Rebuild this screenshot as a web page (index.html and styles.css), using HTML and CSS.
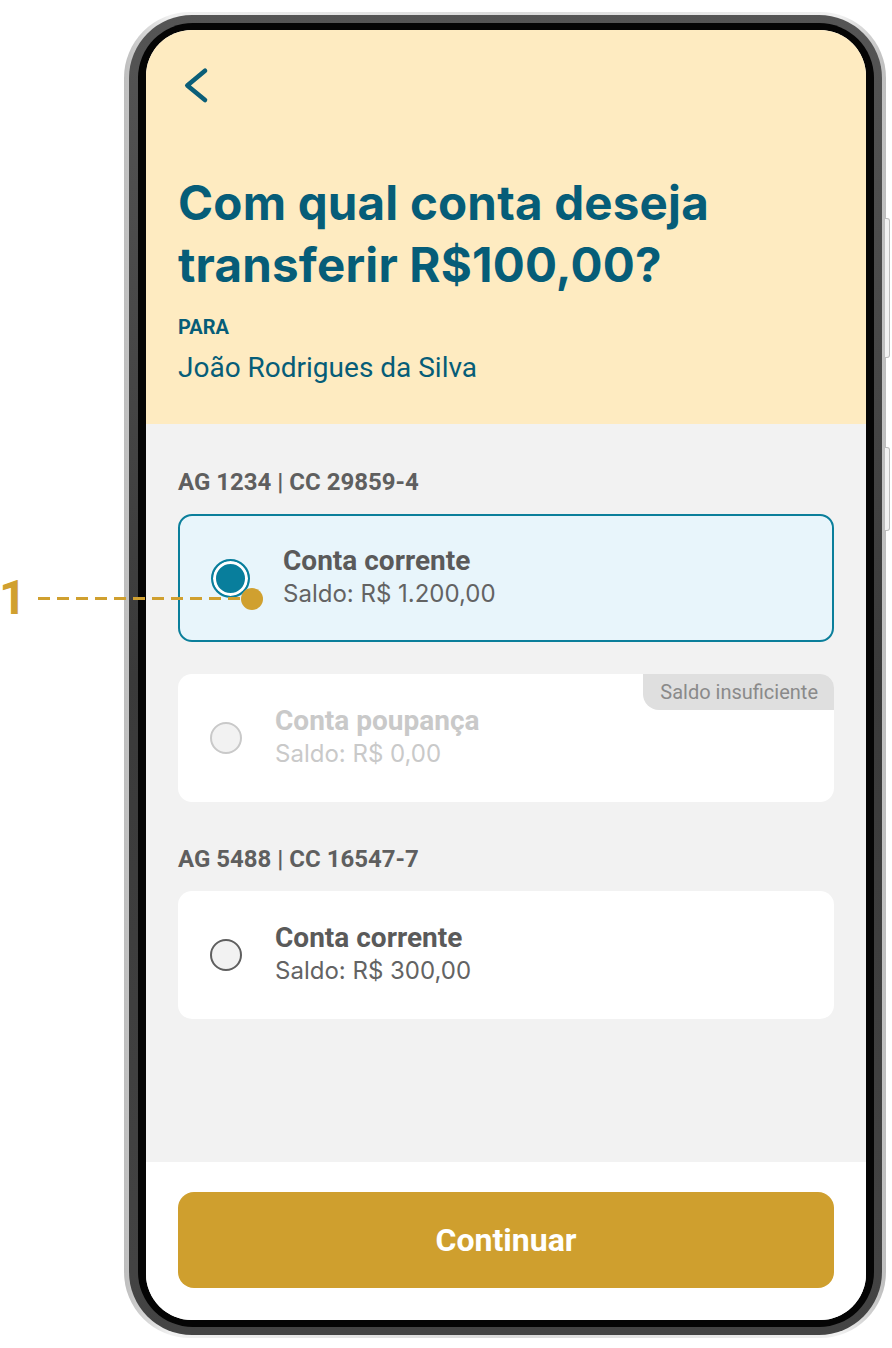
FILE: index.html
```html
<!DOCTYPE html>
<html lang="pt-BR">
<head>
    <meta charset="UTF-8">
    <meta name="viewport" content="width=device-width, initial-scale=1.0">
    <title>Transferência - escolher conta</title>
    <link rel="stylesheet" href="styles.css">
</head>
<body>
    <div class="stage">
        <div class="phone">
            <span class="side-btn side-btn-top"></span>
            <span class="side-btn side-btn-bottom"></span>
            <div class="bezel">
                <div class="glass">
                    <div class="screen">
                        <div class="header">
                            <button class="back" aria-label="Voltar">
                                <svg width="28" height="40" viewBox="0 0 28 40">
                                    <path d="M23 4.7 L5.3 19.4 L23 34" fill="none" stroke="#0b5e78" stroke-width="4.6" stroke-linecap="round" stroke-linejoin="round"/>
                                </svg>
                            </button>
                            <h1 class="title">Com qual conta deseja transferir R$100,00?</h1>
                            <div class="to-label">PARA</div>
                            <div class="to-name">João Rodrigues da Silva</div>
                        </div>

                        <div class="content">
                            <div class="group-label">AG 1234 | CC 29859-4</div>
                            <div class="card selected">
                                <span class="radio checked"></span>
                                <div class="card-text">
                                    <div class="card-title">Conta corrente</div>
                                    <div class="card-balance">Saldo: R$ 1.200,00</div>
                                </div>
                            </div>
                            <div class="card disabled">
                                <span class="badge">Saldo insuficiente</span>
                                <span class="radio"></span>
                                <div class="card-text">
                                    <div class="card-title">Conta poupança</div>
                                    <div class="card-balance">Saldo: R$ 0,00</div>
                                </div>
                            </div>

                            <div class="group-label second">AG 5488 | CC 16547-7</div>
                            <div class="card">
                                <span class="radio"></span>
                                <div class="card-text">
                                    <div class="card-title">Conta corrente</div>
                                    <div class="card-balance">Saldo: R$ 300,00</div>
                                </div>
                            </div>
                        </div>

                        <div class="footer">
                            <button class="primary">Continuar</button>
                        </div>
                    </div>
                </div>
            </div>
        </div>

        <!-- marcador de anotação -->
        <div class="note-num">1</div>
        <div class="note-line"></div>
        <div class="note-dot"></div>
    </div>
</body>
</html>
```

FILE: styles.css
```css
body {
    margin: 0;
    background-color: #fff;
    font-family: Roboto, "Liberation Sans", sans-serif;
}
.stage {
    position: relative;
    width: 892px;
    height: 1348px;
    padding: 12px 0 0 124px;
    box-sizing: border-box;
}

/* moldura do aparelho */
.phone {
    position: relative;
    display: inline-block;
    padding: 3px 4px 3px 5px;
    border-radius: 66px;
    background: linear-gradient(90deg, #bdbdbd, #f0f0f0 6%, #dadada 50%, #f0f0f0 94%, #bdbdbd);
}
.bezel {
    padding: 8px 8px 8px 9px;
    border-radius: 63px;
    background: linear-gradient(180deg, #555, #3a3a3a 50%, #444);
}
.glass {
    padding: 7px 8px 7px 8px;
    border-radius: 55px;
    background-color: #050505;
}
.side-btn {
    position: absolute;
    right: -4px;
    width: 4px;
    border: 1px solid #bdbdbd;
    border-left: none;
    border-radius: 0 3px 3px 0;
    background-color: #f2f2f2;
}
.side-btn-top {
    top: 206px;
    height: 138px;
}
.side-btn-bottom {
    top: 435px;
    height: 82px;
}

.screen {
    width: 720px;
    height: 1290px;
    border-radius: 46px;
    overflow: hidden;
    display: flex;
    flex-direction: column;
    background-color: #f2f2f2;
}

/* cabeçalho */
.header {
    flex: none;
    height: 394px;
    box-sizing: border-box;
    padding: 36px 32px 0;
    background-color: #feebc1;
    color: #065d78;
}
.back {
    display: block;
    margin: 0 0 0 4px;
    padding: 0;
    border: none;
    background: none;
    width: 28px;
    height: 40px;
}
.back svg {
    display: block;
}
.title {
    margin: 66px 0 0;
    font-family: Inter, Roboto, sans-serif;
    font-size: 47.5px;
    line-height: 62px;
    font-weight: 700;
    letter-spacing: 0.2px;
}
.to-label {
    margin-top: 20px;
    font-size: 20px;
    line-height: 22px;
    font-weight: 700;
}
.to-name {
    margin-top: 14px;
    font-size: 28px;
    line-height: 32px;
}

/* lista de contas */
.content {
    flex: 1;
    padding: 45px 32px 0;
}
.group-label {
    font-size: 24px;
    line-height: 26px;
    font-weight: 700;
    color: #5f5f5f;
    margin-bottom: 19px;
}
.group-label.second {
    margin-top: 44px;
}
.card {
    position: relative;
    height: 128px;
    box-sizing: border-box;
    display: flex;
    align-items: center;
    gap: 33px;
    padding-left: 32px;
    border-radius: 14px;
    background-color: #fff;
}
.card + .card {
    margin-top: 32px;
}
.card.selected {
    padding-left: 31px;
    border: 2px solid #0b7f9b;
    background-color: #e8f5fb;
}
.radio {
    flex: none;
    width: 32px;
    height: 32px;
    box-sizing: border-box;
    border: 2px solid #5f5f5f;
    border-radius: 50%;
    background-color: #f2f2f2;
}
.radio.checked {
    width: 39px;
    height: 39px;
    border-color: #087e9c;
    background-color: #087e9c;
    box-shadow: inset 0 0 0 3px #fff;
}
.card-title {
    font-size: 28px;
    line-height: 32px;
    font-weight: 700;
    color: #5a5a5a;
}
.card-balance {
    font-family: Inter, Roboto, sans-serif;
    font-size: 24px;
    line-height: 34px;
    color: #636363;
}
.card.disabled .radio {
    border-color: #c9c9c9;
}
.card.disabled .card-title,
.card.disabled .card-balance {
    color: #c9c9c9;
}
.badge {
    position: absolute;
    top: 0;
    right: 0;
    height: 36px;
    line-height: 36px;
    padding: 0 16px 0 17px;
    border-radius: 0 14px 0 16px;
    background-color: #dfdfdf;
    color: #8a8a8a;
    font-size: 20px;
}

/* rodapé */
.footer {
    flex: none;
    padding: 30px 32px 32px;
    background-color: #fff;
}
.primary {
    display: block;
    width: 100%;
    height: 96px;
    border: none;
    border-radius: 16px;
    background-color: #cf9f2e;
    color: #fff;
    font-family: Roboto, sans-serif;
    font-size: 32px;
    font-weight: 700;
}

/* anotação */
.note-num {
    position: absolute;
    left: -1px;
    top: 570px;
    font-size: 48px;
    line-height: 56px;
    font-weight: 700;
    color: #d0a02f;
}
.note-line {
    position: absolute;
    left: 38px;
    top: 597px;
    width: 208px;
    height: 3px;
    background: repeating-linear-gradient(90deg, #d0a02f 0 12px, transparent 12px 19px);
}
.note-dot {
    position: absolute;
    left: 241px;
    top: 588px;
    width: 22px;
    height: 22px;
    border-radius: 50%;
    background-color: #d0a02f;
}
```
